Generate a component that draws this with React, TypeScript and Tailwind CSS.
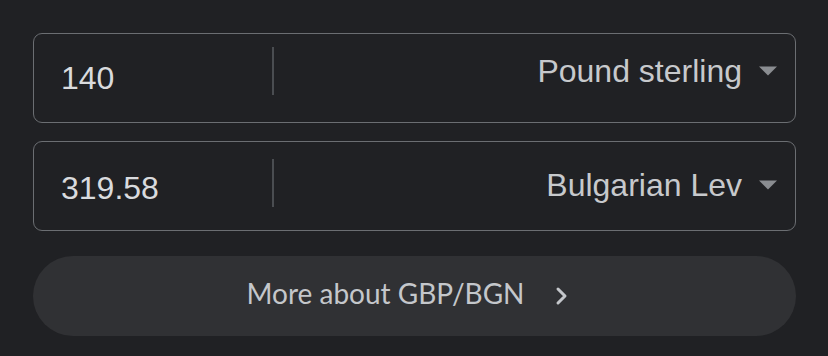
import React from "react";

function Row({
  value,
  currency,
  valuePt,
  dividerMt,
  rightPt,
}: {
  value: string;
  currency: string;
  valuePt: string;
  dividerMt: string;
  rightPt: string;
}) {
  return (
    <div className="flex h-[90px] items-start rounded-[9px] border-[1.5px] border-[#6b6e72] bg-[#202124]">
      <div className={`flex w-[238px] items-start pl-[27px] text-[32px] leading-none text-[#d9dbde] ${valuePt}`}>
        {value}
      </div>
      <div className={`h-[48px] w-[2px] bg-[#4a4d51] ${dividerMt}`} />
      <div className={`flex flex-1 items-start justify-end pr-[17px] ${rightPt}`}>
        <span className="text-[32px] leading-none text-[#c7c9cc]">{currency}</span>
        <svg width="20" height="10" viewBox="0 0 20 10" className="ml-[16px] mt-[11px]">
          <polygon points="1,0.5 19,0.5 10,9.5" fill="#8a8d91" />
        </svg>
      </div>
    </div>
  );
}

export default function App() {
  return (
    <div
      className="h-[356px] w-[828px] bg-[#202124] pl-[33px] pr-[32px] pt-[33px]"
      style={{ fontFamily: '"Liberation Sans", Arial, sans-serif' }}
    >
      <div className="flex flex-col gap-[18px]">
        <Row value="140" currency="Pound sterling" valuePt="pt-[28px]" dividerMt="mt-[13px]" rightPt="pt-[21px]" />
        <Row value="319.58" currency="Bulgarian Lev" valuePt="pt-[30px]" dividerMt="mt-[17px]" rightPt="pt-[27px]" />
      </div>
      <div className="mt-[25px] flex h-[80px] items-center justify-center rounded-full bg-[#303134] pr-[14px] text-[#c4c7cb]">
        <span
          className="mb-[6px] text-[28px] leading-none"
          style={{ fontFamily: 'Lato, "Open Sans", sans-serif' }}
        >
          More about GBP/BGN
        </span>
        <svg width="14" height="20" viewBox="0 0 14 20" className="ml-[30px]">
          <path d="M3 3 L10 10 L3 17" fill="none" stroke="#c4c7cb" strokeWidth="3" strokeLinecap="round" strokeLinejoin="round" />
        </svg>
      </div>
    </div>
  );
}
